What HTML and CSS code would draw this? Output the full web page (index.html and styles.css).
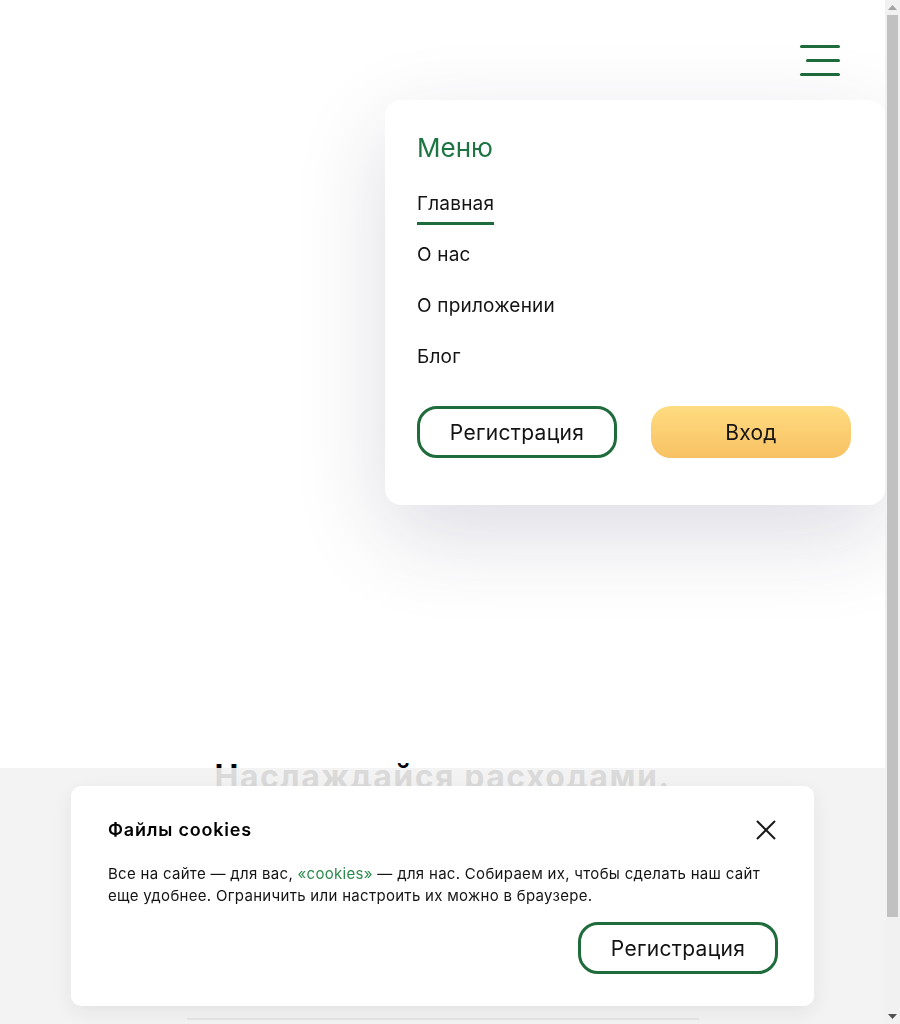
FILE: index.html
```html
<!DOCTYPE html>
<html lang="ru">
<head>
<meta charset="utf-8">
<title>Меню</title>
<link rel="stylesheet" href="styles.css">
</head>
<body>
<header class="header">
  <button class="burger" aria-label="Меню">
    <span class="burger-line"></span>
    <span class="burger-line burger-line-short"></span>
    <span class="burger-line"></span>
  </button>
</header>

<main class="main">
  <section class="hero">
    <h1 class="hero-title">Наслаждайся расходами.</h1>
    <div class="hero-text"></div>
    <div class="hero-line"></div>
  </section>
</main>

<nav class="menu">
  <h2 class="menu-title">Меню</h2>
  <ul class="menu-list">
    <li><a class="menu-link menu-link-active" href="#">Главная</a></li>
    <li><a class="menu-link" href="#">О нас</a></li>
    <li><a class="menu-link" href="#">О приложении</a></li>
    <li><a class="menu-link" href="#">Блог</a></li>
  </ul>
  <div class="menu-actions">
    <a class="btn btn-outline" href="#">Регистрация</a>
    <a class="btn btn-yellow" href="#">Вход</a>
  </div>
</nav>

<div class="cookie-layer">
  <div class="cookie">
    <div class="cookie-head">
      <h3 class="cookie-title">Файлы cookies</h3>
      <button class="cookie-close" aria-label="Закрыть">
        <svg width="20" height="20" viewBox="0 0 20 20"><path d="M1 1L19 19M19 1L1 19" stroke="#1a1a1a" stroke-width="2" fill="none"/></svg>
      </button>
    </div>
    <p class="cookie-text">Все на сайте — для вас, <a class="cookie-link" href="#">«cookies»</a> — для нас. Собираем их, чтобы сделать наш сайт еще удобнее. Ограничить или настроить их можно в браузере.</p>
    <div class="cookie-actions">
      <a class="btn btn-outline" href="#">Регистрация</a>
    </div>
  </div>
</div>

<div class="scrollbar" aria-hidden="true">
  <div class="scroll-btn">
    <svg width="9" height="5" viewBox="0 0 9 5"><path d="M0 5L4.5 0L9 5Z" fill="#a3a3a3"/></svg>
  </div>
  <div class="scroll-track">
    <div class="scroll-thumb"></div>
  </div>
  <div class="scroll-btn">
    <svg width="9" height="5" viewBox="0 0 9 5"><path d="M0 0L4.5 5L9 0Z" fill="#505050"/></svg>
  </div>
</div>
</body>
</html>
```

FILE: styles.css
```css
* { box-sizing: border-box; }

html, body { margin: 0; padding: 0; }

body {
  font-family: Inter, "Noto Sans", sans-serif;
  color: #141414;
  background: #ffffff;
  min-height: 1130px;
  margin-right: 15px;
}

.header {
  display: flex;
  justify-content: flex-end;
  padding: 45px 45px 0 0;
}

.burger {
  display: flex;
  flex-direction: column;
  align-items: flex-end;
  gap: 11px;
  width: 40px;
  padding: 0;
  border: 0;
  background: none;
}

.burger-line {
  display: block;
  width: 40px;
  height: 3px;
  border-radius: 2px;
  background: #1e6b3b;
}

.burger-line-short { width: 34px; }

.main { padding-top: 681px; }

.hero {
  display: flex;
  flex-direction: column;
  align-items: center;
}

.hero-title {
  margin: 0;
  font-size: 32px;
  line-height: 40px;
  font-weight: 700;
  color: #000;
  letter-spacing: 1.5px;
}

.hero-text { height: 221px; }

.hero-line {
  width: 512px;
  height: 2px;
  background: #6b7072;
}

.menu {
  position: fixed;
  top: 100px;
  right: 15px;
  width: 500px;
  padding: 32px 34px 47px 32px;
  background: #fff;
  border-radius: 16px;
  box-shadow: 0 30px 90px rgba(40, 40, 80, 0.16);
}

.menu-title {
  margin: 0 0 28px;
  font-size: 26px;
  line-height: 32px;
  font-weight: 400;
  color: #1f7443;
}

.menu-list {
  list-style: none;
  margin: 0;
  padding: 0;
  display: flex;
  flex-direction: column;
  align-items: flex-start;
  gap: 18px;
}

.menu-link {
  display: block;
  font-size: 19px;
  line-height: 24px;
  letter-spacing: 0.2px;
  padding-bottom: 6px;
  color: #141414;
  text-decoration: none;
  border-bottom: 3px solid transparent;
}

.menu-link-active { border-bottom-color: #1e6b3b; }

.menu-actions {
  display: flex;
  justify-content: space-between;
  margin-top: 28px;
}

.btn {
  display: flex;
  align-items: center;
  justify-content: center;
  width: 200px;
  height: 52px;
  border-radius: 20px;
  font-size: 21px;
  letter-spacing: 0.3px;
  color: #141414;
  text-decoration: none;
}

.btn-outline {
  border: 3px solid #1e6b3b;
  background: #fff;
}

.btn-yellow {
  background: linear-gradient(180deg, #ffdc80 0%, #f7c163 100%);
}

.cookie-layer {
  position: fixed;
  left: 0;
  right: 15px;
  bottom: 0;
  height: 256px;
  padding: 18px 0;
  display: flex;
  justify-content: center;
  background: rgba(242, 242, 242, 0.9);
}

.cookie {
  width: 743px;
  padding: 32px 36px 32px 37px;
  background: #fff;
  border-radius: 10px;
  box-shadow: 0 6px 20px rgba(0, 0, 0, 0.07);
}

.cookie-head {
  display: flex;
  justify-content: space-between;
  align-items: center;
}

.cookie-title {
  margin: 0;
  font-size: 18px;
  line-height: 24px;
  font-weight: 600;
  letter-spacing: 0.8px;
  color: #000;
}

.cookie-close {
  display: flex;
  padding: 0;
  margin-right: 2px;
  border: 0;
  background: none;
}

.cookie-text {
  margin: 21px 0 0;
  font-size: 15px;
  line-height: 22px;
  letter-spacing: 0.3px;
  color: #141414;
}

.cookie-link {
  color: #2b8a4b;
  text-decoration: none;
}

.cookie-actions {
  display: flex;
  justify-content: flex-end;
  margin-top: 15px;
}

.scrollbar {
  position: fixed;
  top: 0;
  right: 0;
  bottom: 0;
  width: 15px;
  display: flex;
  flex-direction: column;
  background: #f1f1f1;
}

.scroll-btn {
  display: flex;
  align-items: center;
  justify-content: center;
  height: 15px;
  flex: none;
}

.scroll-track {
  flex: 1;
  padding: 0 2px;
}

.scroll-thumb {
  height: 902px;
  background: #c1c1c1;
}
```
